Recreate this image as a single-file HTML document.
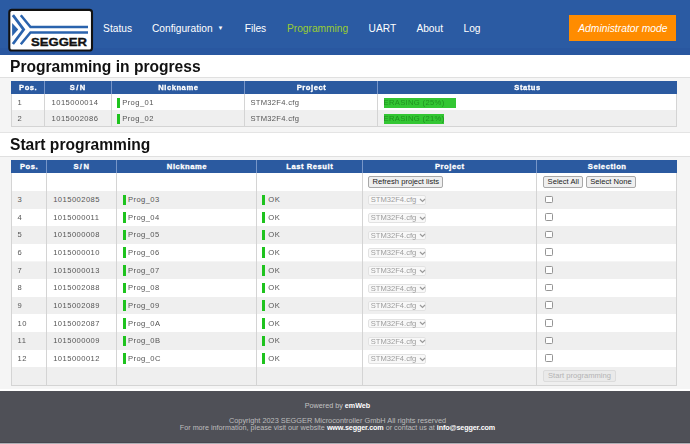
<!DOCTYPE html>
<html><head><meta charset="utf-8"><style>
*{box-sizing:border-box}
html,body{margin:0;padding:0;width:690px;height:444px;overflow:hidden;background:#fff;font-family:"Liberation Sans", sans-serif}
.a{position:absolute;white-space:nowrap}
.nav{position:absolute;top:22.5px;font-size:10.2px;color:#fff;line-height:12px;white-space:nowrap}
.th{position:absolute;color:#fff;font-weight:bold;font-size:7.6px;letter-spacing:0.55px;padding-top:0.3px;padding-left:0.8px;-webkit-text-stroke:0.3px #fff;text-align:center;white-space:nowrap}
.td{position:absolute;color:#555;font-size:7.6px;letter-spacing:0.45px;line-height:8px;white-space:nowrap}
.gb{position:absolute;width:3px;height:10.5px;background:#1ec31e}
.btn{position:absolute;background:#efefef;border:1px solid #a8a8a8;border-radius:2px;font-size:7.6px;color:#222;text-align:center;white-space:nowrap}
.sel{position:absolute;border:1px solid #e2e2e2;border-radius:2px;font-size:7.6px;color:#9c9c9c;background:#f8f8f8;white-space:nowrap}
.cb{position:absolute;width:7.5px;height:7.5px;border:1px solid #959595;border-radius:1.3px;background:#fff}
</style></head><body>

<div id="wrap" style="position:absolute;left:0;top:0;width:690px;height:444px;filter:blur(0.3px)">
<div class="a" style="left:0;top:0;width:690px;height:54.7px;background:#2b5ba3"></div>
<div class="a" style="left:0;top:48px;width:690px;height:6.7px;background:#2957a0"></div>
<svg class="a" style="left:0;top:0" width="100" height="56" viewBox="0 0 100 56">
<rect x="9.3" y="9.9" width="82.7" height="40.6" rx="2.6" ry="2.6" fill="#fff" stroke="#111" stroke-width="2.1"/>
<path d="M12.1 22.9 L18.2 29.6 L12.1 36.3 Z" fill="#2a63ad"/>
<path d="M12.9 15.1 L23.7 29.6 L12.9 44" fill="none" stroke="#2a63ad" stroke-width="2.7"/>
<path d="M20.8 15.2 L30.5 27 L88 27 M88 32.4 L30.5 32.4 L20.8 44.3" fill="none" stroke="#2a63ad" stroke-width="2.5"/>
<text x="31" y="45.6" font-family="Liberation Sans" font-weight="bold" font-size="10.9" textLength="56" lengthAdjust="spacingAndGlyphs" fill="#111" stroke="#111" stroke-width="0.35">SEGGER</text>
</svg>
<div class="nav" style="left:103.1px;color:#fff">Status</div>
<div class="nav" style="left:152px;color:#fff">Configuration</div>
<div class="nav" style="left:244.7px;color:#fff">Files</div>
<div class="nav" style="left:287px;color:#9acd32">Programming</div>
<div class="nav" style="left:368.6px;color:#fff">UART</div>
<div class="nav" style="left:416.4px;color:#fff">About</div>
<div class="nav" style="left:463.5px;color:#fff">Log</div>
<div class="nav" style="left:217.6px;top:21.5px;font-size:6px">&#9660;</div>
<div class="a" style="left:568.8px;top:15.2px;width:107.2px;height:25.8px;background:#ff8c00;color:#fff;font-style:italic;font-size:10.3px;line-height:28.2px;text-align:center;padding-left:1px">Administrator mode</div>
<div class="a" style="left:10px;top:57.6px;font-size:15.6px;font-weight:bold;color:#111;line-height:18px">Programming in progress</div>
<div class="a" style="left:0;top:76.5px;width:690px;height:56.4px;background:#f5f5f5;border-top:1px solid #e0e0e0;border-bottom:1px solid #e4e4e4"></div>
<div class="a" style="left:10px;top:136.2px;font-size:15.6px;font-weight:bold;color:#111;line-height:18px">Start programming</div>
<div class="a" style="left:0;top:156px;width:690px;height:233.3px;background:#f5f5f5;border-top:1px solid #e0e0e0"></div>
<div class="a" style="left:11px;top:81.2px;width:665.9px;height:13.2px;background:#2b5aa0"></div>
<div class="th" style="left:11px;top:81.2px;width:33.5px;line-height:13.2px">Pos.</div>
<div class="th" style="left:44.5px;top:81.2px;width:66.7px;line-height:13.2px"><span style="letter-spacing:1.4px">S/N</span></div>
<div class="th" style="left:111.2px;top:81.2px;width:133.5px;line-height:13.2px">Nickname</div>
<div class="th" style="left:244.7px;top:81.2px;width:132.8px;line-height:13.2px">Project</div>
<div class="th" style="left:377.5px;top:81.2px;width:299.4px;line-height:13.2px">Status</div>
<div class="a" style="left:44.0px;top:81.2px;width:1px;height:13.2px;background:#7896c8"></div>
<div class="a" style="left:110.7px;top:81.2px;width:1px;height:13.2px;background:#7896c8"></div>
<div class="a" style="left:244.2px;top:81.2px;width:1px;height:13.2px;background:#7896c8"></div>
<div class="a" style="left:377.0px;top:81.2px;width:1px;height:13.2px;background:#7896c8"></div>
<div class="a" style="left:11px;top:94.4px;width:665.9px;height:16px;background:#fff"></div>
<div class="a" style="left:11px;top:110.4px;width:665.9px;height:15.8px;background:#efefef"></div>
<div class="a" style="left:10.5px;top:94.4px;width:666.9px;height:32.3px;border:1px solid #d4d4d4;border-top:none"></div>
<div class="a" style="left:44.0px;top:94.4px;width:1px;height:31.8px;background:#d4d4d4"></div>
<div class="a" style="left:110.7px;top:94.4px;width:1px;height:31.8px;background:#d4d4d4"></div>
<div class="a" style="left:244.2px;top:94.4px;width:1px;height:31.8px;background:#d4d4d4"></div>
<div class="a" style="left:377.0px;top:94.4px;width:1px;height:31.8px;background:#d4d4d4"></div>
<div class="td" style="left:17.6px;top:99.0px">1</div>
<div class="td" style="left:51.6px;top:99.0px">1015000014</div>
<div class="gb" style="left:117.2px;top:97.5px"></div>
<div class="td" style="left:122.2px;top:99.0px;letter-spacing:0.42px">Prog_01</div>
<div class="td" style="left:250.4px;top:99.0px;letter-spacing:0.3px">STM32F4.cfg</div>
<div class="a" style="left:383.7px;top:97.80000000000001px;width:72.5px;height:9.8px;background:#33c633"></div>
<div class="td" style="left:383.5px;top:99.3px;color:#1f911f;letter-spacing:0.35px">ERASING (25%)</div>
<div class="td" style="left:17.6px;top:115.0px">2</div>
<div class="td" style="left:51.6px;top:115.0px">1015002086</div>
<div class="gb" style="left:117.2px;top:113.5px"></div>
<div class="td" style="left:122.2px;top:115.0px;letter-spacing:0.42px">Prog_02</div>
<div class="td" style="left:250.4px;top:115.0px;letter-spacing:0.3px">STM32F4.cfg</div>
<div class="a" style="left:383.7px;top:113.80000000000001px;width:60.6px;height:9.8px;background:#33c633"></div>
<div class="td" style="left:383.5px;top:115.3px;color:#1f911f;letter-spacing:0.35px">ERASING (21%)</div>
<div class="a" style="left:11px;top:159.9px;width:665.9px;height:13.1px;background:#2b5aa0"></div>
<div class="th" style="left:11px;top:159.9px;width:35.4px;line-height:13.1px">Pos.</div>
<div class="th" style="left:46.4px;top:159.9px;width:70.1px;line-height:13.1px"><span style="letter-spacing:1.4px">S/N</span></div>
<div class="th" style="left:116.5px;top:159.9px;width:140.2px;line-height:13.1px">Nickname</div>
<div class="th" style="left:256.7px;top:159.9px;width:105.30000000000001px;line-height:13.1px">Last Result</div>
<div class="th" style="left:362px;top:159.9px;width:174.70000000000005px;line-height:13.1px">Project</div>
<div class="th" style="left:536.7px;top:159.9px;width:140.19999999999993px;line-height:13.1px">Selection</div>
<div class="a" style="left:45.9px;top:159.9px;width:1px;height:13.1px;background:#7896c8"></div>
<div class="a" style="left:116.0px;top:159.9px;width:1px;height:13.1px;background:#7896c8"></div>
<div class="a" style="left:256.2px;top:159.9px;width:1px;height:13.1px;background:#7896c8"></div>
<div class="a" style="left:361.5px;top:159.9px;width:1px;height:13.1px;background:#7896c8"></div>
<div class="a" style="left:536.2px;top:159.9px;width:1px;height:13.1px;background:#7896c8"></div>
<div class="a" style="left:11px;top:173.0px;width:665.9px;height:17.9px;background:#fff"></div>
<div class="a" style="left:11px;top:190.9px;width:665.9px;height:17.65px;background:#efefef"></div>
<div class="a" style="left:11px;top:208.55px;width:665.9px;height:17.65px;background:#fff"></div>
<div class="a" style="left:11px;top:226.20000000000002px;width:665.9px;height:17.65px;background:#efefef"></div>
<div class="a" style="left:11px;top:243.85000000000002px;width:665.9px;height:17.65px;background:#fff"></div>
<div class="a" style="left:11px;top:261.5px;width:665.9px;height:17.65px;background:#efefef"></div>
<div class="a" style="left:11px;top:279.15px;width:665.9px;height:17.65px;background:#fff"></div>
<div class="a" style="left:11px;top:296.79999999999995px;width:665.9px;height:17.65px;background:#efefef"></div>
<div class="a" style="left:11px;top:314.44999999999993px;width:665.9px;height:17.65px;background:#fff"></div>
<div class="a" style="left:11px;top:332.0999999999999px;width:665.9px;height:17.65px;background:#efefef"></div>
<div class="a" style="left:11px;top:349.7499999999999px;width:665.9px;height:17.65px;background:#fff"></div>
<div class="a" style="left:11px;top:367.39999999999986px;width:665.9px;height:17.6px;background:#efefef"></div>
<div class="a" style="left:10.5px;top:173.0px;width:666.9px;height:212.4999999999999px;border:1px solid #d4d4d4;border-top:none"></div>
<div class="a" style="left:45.9px;top:173.0px;width:1px;height:211.9999999999999px;background:#d4d4d4"></div>
<div class="a" style="left:116.0px;top:173.0px;width:1px;height:211.9999999999999px;background:#d4d4d4"></div>
<div class="a" style="left:256.2px;top:173.0px;width:1px;height:211.9999999999999px;background:#d4d4d4"></div>
<div class="a" style="left:361.5px;top:173.0px;width:1px;height:211.9999999999999px;background:#d4d4d4"></div>
<div class="a" style="left:536.2px;top:173.0px;width:1px;height:211.9999999999999px;background:#d4d4d4"></div>
<div class="btn" style="left:368.3px;top:176.4px;width:75px;height:12px;line-height:10.8px">Refresh project lists</div>
<div class="btn" style="left:543.2px;top:176.3px;width:40.1px;height:12px;line-height:10.8px">Select All</div>
<div class="btn" style="left:585.7px;top:176.3px;width:50.5px;height:12px;line-height:10.8px">Select None</div>
<div class="td" style="left:17.6px;top:196.1px">3</div>
<div class="td" style="left:53.2px;top:196.1px">1015002085</div>
<div class="gb" style="left:122.5px;top:194.5px"></div>
<div class="td" style="left:128px;top:196.1px;letter-spacing:0.42px">Prog_03</div>
<div class="gb" style="left:262.3px;top:194.5px"></div>
<div class="td" style="left:268.3px;top:196.1px">OK</div>
<div class="sel" style="left:368.1px;top:195.4px;width:58.4px;height:9.5px;padding-left:1.6px;line-height:7px">STM32F4.cfg<svg style="position:absolute;left:50.2px;top:1.5px" width="7" height="5" viewBox="0 0 7 5"><polyline points="1,1 3.5,3.4 6,1" fill="none" stroke="#9a9a9a" stroke-width="1.2"/></svg></div>
<div class="cb" style="left:545.3px;top:195.5px"></div>
<div class="td" style="left:17.6px;top:213.75px">4</div>
<div class="td" style="left:53.2px;top:213.75px">1015000011</div>
<div class="gb" style="left:122.5px;top:212.15px"></div>
<div class="td" style="left:128px;top:213.75px;letter-spacing:0.42px">Prog_04</div>
<div class="gb" style="left:262.3px;top:212.15px"></div>
<div class="td" style="left:268.3px;top:213.75px">OK</div>
<div class="sel" style="left:368.1px;top:213.05px;width:58.4px;height:9.5px;padding-left:1.6px;line-height:7px">STM32F4.cfg<svg style="position:absolute;left:50.2px;top:1.5px" width="7" height="5" viewBox="0 0 7 5"><polyline points="1,1 3.5,3.4 6,1" fill="none" stroke="#9a9a9a" stroke-width="1.2"/></svg></div>
<div class="cb" style="left:545.3px;top:213.15px"></div>
<div class="td" style="left:17.6px;top:231.39999999999998px">5</div>
<div class="td" style="left:53.2px;top:231.39999999999998px">1015000008</div>
<div class="gb" style="left:122.5px;top:229.79999999999998px"></div>
<div class="td" style="left:128px;top:231.39999999999998px;letter-spacing:0.42px">Prog_05</div>
<div class="gb" style="left:262.3px;top:229.79999999999998px"></div>
<div class="td" style="left:268.3px;top:231.39999999999998px">OK</div>
<div class="sel" style="left:368.1px;top:230.7px;width:58.4px;height:9.5px;padding-left:1.6px;line-height:7px">STM32F4.cfg<svg style="position:absolute;left:50.2px;top:1.5px" width="7" height="5" viewBox="0 0 7 5"><polyline points="1,1 3.5,3.4 6,1" fill="none" stroke="#9a9a9a" stroke-width="1.2"/></svg></div>
<div class="cb" style="left:545.3px;top:230.79999999999998px"></div>
<div class="td" style="left:17.6px;top:249.04999999999998px">6</div>
<div class="td" style="left:53.2px;top:249.04999999999998px">1015000010</div>
<div class="gb" style="left:122.5px;top:247.45px"></div>
<div class="td" style="left:128px;top:249.04999999999998px;letter-spacing:0.42px">Prog_06</div>
<div class="gb" style="left:262.3px;top:247.45px"></div>
<div class="td" style="left:268.3px;top:249.04999999999998px">OK</div>
<div class="sel" style="left:368.1px;top:248.35px;width:58.4px;height:9.5px;padding-left:1.6px;line-height:7px">STM32F4.cfg<svg style="position:absolute;left:50.2px;top:1.5px" width="7" height="5" viewBox="0 0 7 5"><polyline points="1,1 3.5,3.4 6,1" fill="none" stroke="#9a9a9a" stroke-width="1.2"/></svg></div>
<div class="cb" style="left:545.3px;top:248.45px"></div>
<div class="td" style="left:17.6px;top:266.7px">7</div>
<div class="td" style="left:53.2px;top:266.7px">1015000013</div>
<div class="gb" style="left:122.5px;top:265.1px"></div>
<div class="td" style="left:128px;top:266.7px;letter-spacing:0.42px">Prog_07</div>
<div class="gb" style="left:262.3px;top:265.1px"></div>
<div class="td" style="left:268.3px;top:266.7px">OK</div>
<div class="sel" style="left:368.1px;top:266.0px;width:58.4px;height:9.5px;padding-left:1.6px;line-height:7px">STM32F4.cfg<svg style="position:absolute;left:50.2px;top:1.5px" width="7" height="5" viewBox="0 0 7 5"><polyline points="1,1 3.5,3.4 6,1" fill="none" stroke="#9a9a9a" stroke-width="1.2"/></svg></div>
<div class="cb" style="left:545.3px;top:266.1px"></div>
<div class="td" style="left:17.6px;top:284.34999999999997px">8</div>
<div class="td" style="left:53.2px;top:284.34999999999997px">1015002088</div>
<div class="gb" style="left:122.5px;top:282.75px"></div>
<div class="td" style="left:128px;top:284.34999999999997px;letter-spacing:0.42px">Prog_08</div>
<div class="gb" style="left:262.3px;top:282.75px"></div>
<div class="td" style="left:268.3px;top:284.34999999999997px">OK</div>
<div class="sel" style="left:368.1px;top:283.65px;width:58.4px;height:9.5px;padding-left:1.6px;line-height:7px">STM32F4.cfg<svg style="position:absolute;left:50.2px;top:1.5px" width="7" height="5" viewBox="0 0 7 5"><polyline points="1,1 3.5,3.4 6,1" fill="none" stroke="#9a9a9a" stroke-width="1.2"/></svg></div>
<div class="cb" style="left:545.3px;top:283.75px"></div>
<div class="td" style="left:17.6px;top:302.0px">9</div>
<div class="td" style="left:53.2px;top:302.0px">1015002089</div>
<div class="gb" style="left:122.5px;top:300.40000000000003px"></div>
<div class="td" style="left:128px;top:302.0px;letter-spacing:0.42px">Prog_09</div>
<div class="gb" style="left:262.3px;top:300.40000000000003px"></div>
<div class="td" style="left:268.3px;top:302.0px">OK</div>
<div class="sel" style="left:368.1px;top:301.3px;width:58.4px;height:9.5px;padding-left:1.6px;line-height:7px">STM32F4.cfg<svg style="position:absolute;left:50.2px;top:1.5px" width="7" height="5" viewBox="0 0 7 5"><polyline points="1,1 3.5,3.4 6,1" fill="none" stroke="#9a9a9a" stroke-width="1.2"/></svg></div>
<div class="cb" style="left:545.3px;top:301.40000000000003px"></div>
<div class="td" style="left:17.6px;top:319.65px">10</div>
<div class="td" style="left:53.2px;top:319.65px">1015002087</div>
<div class="gb" style="left:122.5px;top:318.05px"></div>
<div class="td" style="left:128px;top:319.65px;letter-spacing:0.42px">Prog_0A</div>
<div class="gb" style="left:262.3px;top:318.05px"></div>
<div class="td" style="left:268.3px;top:319.65px">OK</div>
<div class="sel" style="left:368.1px;top:318.95px;width:58.4px;height:9.5px;padding-left:1.6px;line-height:7px">STM32F4.cfg<svg style="position:absolute;left:50.2px;top:1.5px" width="7" height="5" viewBox="0 0 7 5"><polyline points="1,1 3.5,3.4 6,1" fill="none" stroke="#9a9a9a" stroke-width="1.2"/></svg></div>
<div class="cb" style="left:545.3px;top:319.05px"></div>
<div class="td" style="left:17.6px;top:337.3px">11</div>
<div class="td" style="left:53.2px;top:337.3px">1015000009</div>
<div class="gb" style="left:122.5px;top:335.70000000000005px"></div>
<div class="td" style="left:128px;top:337.3px;letter-spacing:0.42px">Prog_0B</div>
<div class="gb" style="left:262.3px;top:335.70000000000005px"></div>
<div class="td" style="left:268.3px;top:337.3px">OK</div>
<div class="sel" style="left:368.1px;top:336.6px;width:58.4px;height:9.5px;padding-left:1.6px;line-height:7px">STM32F4.cfg<svg style="position:absolute;left:50.2px;top:1.5px" width="7" height="5" viewBox="0 0 7 5"><polyline points="1,1 3.5,3.4 6,1" fill="none" stroke="#9a9a9a" stroke-width="1.2"/></svg></div>
<div class="cb" style="left:545.3px;top:336.70000000000005px"></div>
<div class="td" style="left:17.6px;top:354.95px">12</div>
<div class="td" style="left:53.2px;top:354.95px">1015000012</div>
<div class="gb" style="left:122.5px;top:353.35px"></div>
<div class="td" style="left:128px;top:354.95px;letter-spacing:0.42px">Prog_0C</div>
<div class="gb" style="left:262.3px;top:353.35px"></div>
<div class="td" style="left:268.3px;top:354.95px">OK</div>
<div class="sel" style="left:368.1px;top:354.25px;width:58.4px;height:9.5px;padding-left:1.6px;line-height:7px">STM32F4.cfg<svg style="position:absolute;left:50.2px;top:1.5px" width="7" height="5" viewBox="0 0 7 5"><polyline points="1,1 3.5,3.4 6,1" fill="none" stroke="#9a9a9a" stroke-width="1.2"/></svg></div>
<div class="cb" style="left:545.3px;top:354.35px"></div>
<div class="btn" style="left:543.2px;top:370.2px;width:72.6px;height:12.2px;line-height:10.2px;color:#b4b4b4;border-color:#dcdcdc;background:#eaeaea">Start programming</div>
<div class="a" style="left:0;top:389.4px;width:690px;height:1.9px;background:#fff"></div>
<div class="a" style="left:0;top:391.3px;width:690px;height:51.3px;background:#4f5057"></div>
<div class="a" style="left:0;top:441.6px;width:690px;height:1px;background:#46474f"></div>
<div class="a" style="left:0;top:442.6px;width:690px;height:2px;background:#aeb0b5"></div>
<div class="a" style="left:0;top:401px;width:675px;text-align:center;font-size:7.2px;line-height:9px;color:#c4c4c4">Powered by <b style="color:#fff">emWeb</b></div>
<div class="a" style="left:0;top:417.4px;width:675px;text-align:center;font-size:7.35px;line-height:8px;color:#bdbdbd">Copyright 2023 SEGGER Microcontroller GmbH All rights reserved</div>
<div class="a" style="left:0;top:424px;width:675px;text-align:center;font-size:7.2px;line-height:8px;color:#bdbdbd">For more information, please visit our website <b style="color:#fff;letter-spacing:-0.12px">www.segger.com</b> or contact us at <b style="color:#fff;letter-spacing:-0.12px">info@segger.com</b></div>
</div></body></html>
